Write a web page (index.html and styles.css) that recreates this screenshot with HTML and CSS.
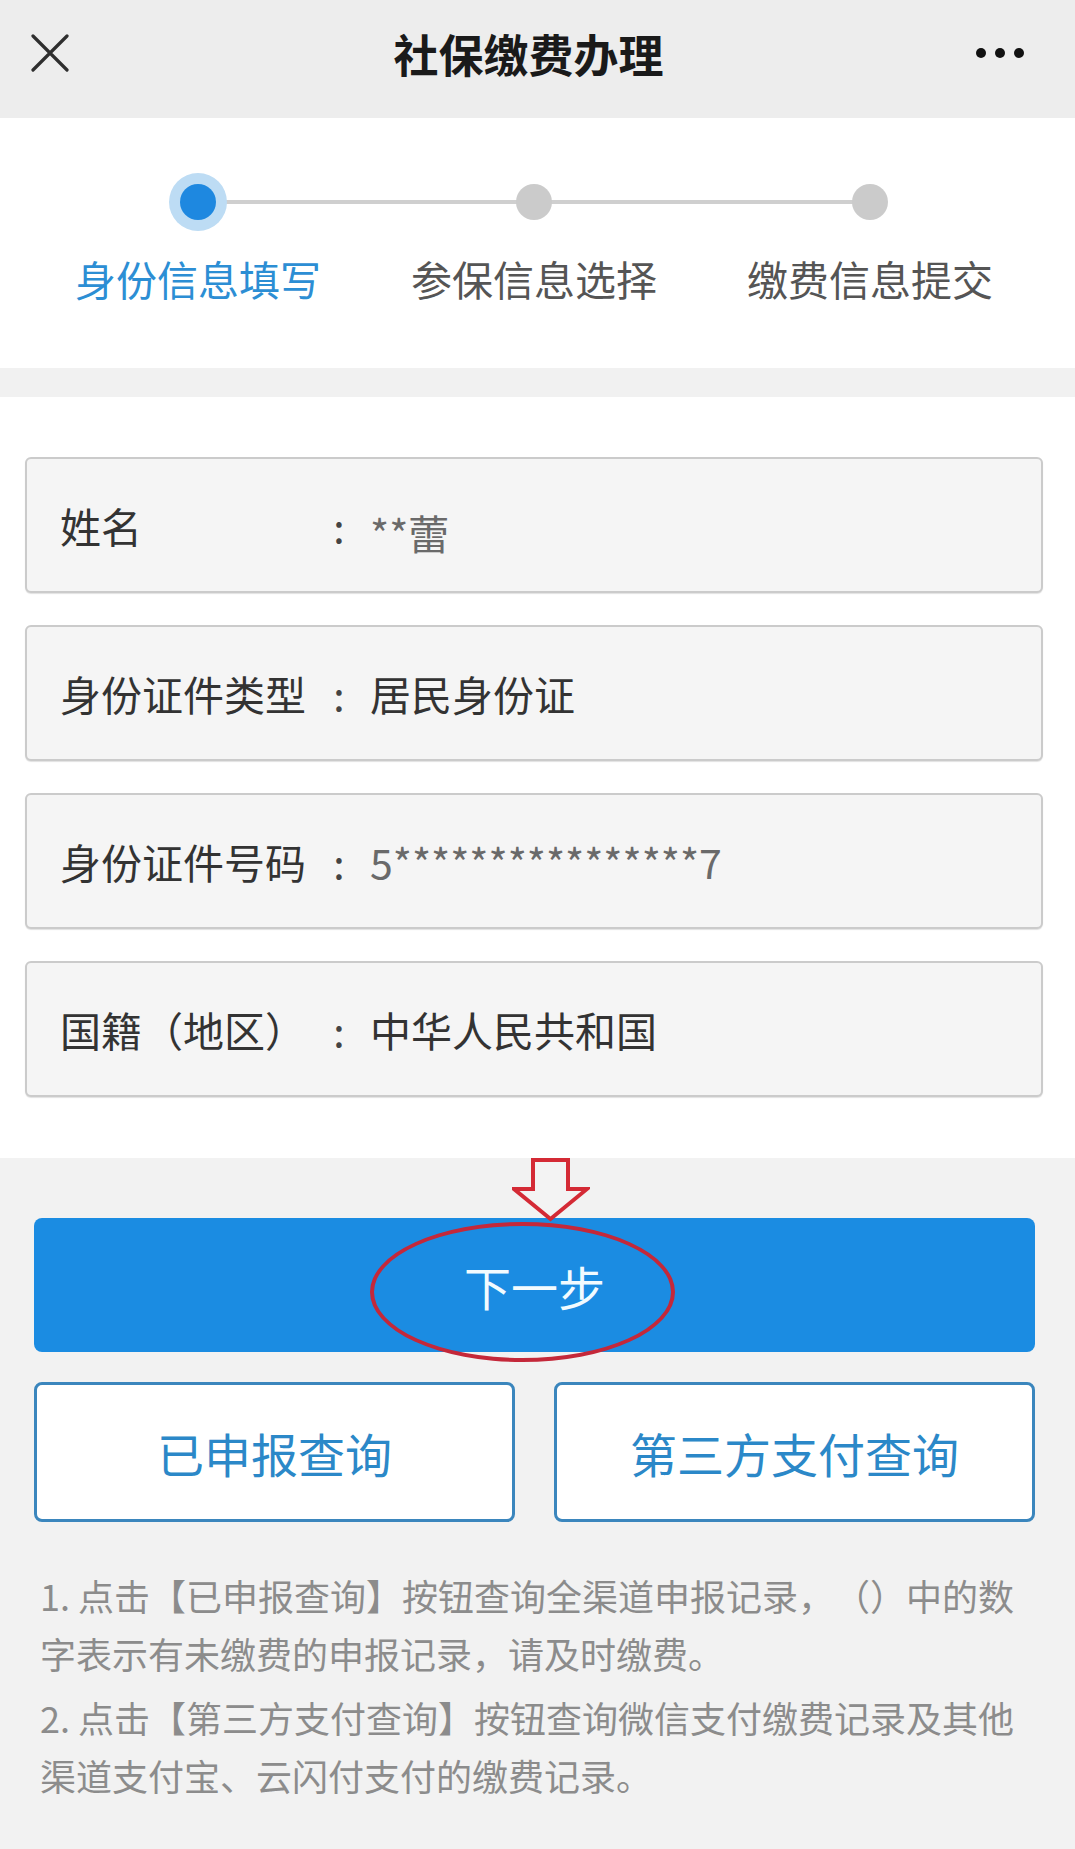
FILE: index.html
```html
<!DOCTYPE html>
<html>
<head>
	<meta charset="utf-8">
	<title>社保缴费办理</title>
	<link rel="stylesheet" href="styles.css">
</head>
<body>
	<div class="topbar">
		<svg class="close" width="38" height="38" viewBox="0 0 38 38">
			<path d="M2 2 L36 36 M36 2 L2 36" stroke="#2e2e2e" stroke-width="3.2" stroke-linecap="round"/>
		</svg>
		<div class="title">社保缴费办理</div>
		<div class="more"><i></i><i></i><i></i></div>
	</div>

	<div class="steps">
		<div class="step active">
			<div class="dot-wrap"><span class="dot"></span></div>
			<div class="step-name">身份信息填写</div>
		</div>
		<div class="step">
			<div class="dot-wrap"><span class="dot"></span></div>
			<div class="step-name">参保信息选择</div>
		</div>
		<div class="step">
			<div class="dot-wrap"><span class="dot"></span></div>
			<div class="step-name">缴费信息提交</div>
		</div>
	</div>

	<div class="band"></div>

	<div class="form">
		<div class="field">
			<span class="label">姓名</span>
			<span class="colon">:</span>
			<span class="value light name">**蕾</span>
		</div>
		<div class="field">
			<span class="label">身份证件类型</span>
			<span class="colon">:</span>
			<span class="value">居民身份证</span>
		</div>
		<div class="field">
			<span class="label">身份证件号码</span>
			<span class="colon">:</span>
			<span class="value light">5****************7</span>
		</div>
		<div class="field">
			<span class="label">国籍（地区）</span>
			<span class="colon">:</span>
			<span class="value">中华人民共和国</span>
		</div>
	</div>

	<div class="actions">
		<svg class="mark-arrow" width="78" height="64" viewBox="0 0 78 64">
			<path d="M21 2 H56 V31 H75 L38.5 61 L2 31 H21 Z" fill="#f3f3f3" stroke="#d42a35" stroke-width="4" stroke-linejoin="miter"/>
		</svg>
		<div class="btn-next">下一步</div>
		<div class="mark-ring"></div>

		<div class="btn-row">
			<div class="btn-line">已申报查询</div>
			<div class="btn-line">第三方支付查询</div>
		</div>

		<div class="notes">
			<p>1. 点击【已申报查询】按钮查询全渠道申报记录，（）中的数字表示有未缴费的申报记录，请及时缴费。</p>
			<p>2. 点击【第三方支付查询】按钮查询微信支付缴费记录及其他渠道支付宝、云闪付支付的缴费记录。</p>
		</div>
	</div>
</body>
</html>
```

FILE: styles.css
```css
body {
	margin: 0;
	background: #f2f2f2;
	font-family: "Noto Sans CJK SC", "Noto Sans", sans-serif;
	color: #333;
	text-spacing-trim: space-all;
}

/* top bar */
.topbar {
	height: 106px; padding: 0 51px 12px 31px;
	background: #ededed;
	display: flex; align-items: center;
}
.close {
	display: block;
	width: 38px; height: 38px;
}
.title {
	flex: 1;
	padding-left: 12px;
	text-align: center;
	font-size: 45px; font-weight: 700;
	color: #1a1a1a;
	line-height: 1;
}
.more {
	display: flex; gap: 9px;
}
.more i {
	width: 10px; height: 10px;
	border-radius: 50%;
	background: #111;
}

/* steps */
.steps {
	background: #fff;
	height: 196px; padding: 54px 0 0 30px;
	display: grid;
	grid-template-columns: repeat(3, 336px);
}
.step {
	position: relative;
	display: flex; flex-direction: column; align-items: center;
}
.step + .step::before {
	content: '';
	position: absolute; z-index: 0;
	top: 28px; left: -50%;
	width: 100%; height: 4px;
	background: #cfcfcf;
}
.dot-wrap {
	position: relative; z-index: 1;
	height: 60px;
	display: flex; align-items: center;
}
.dot {
	width: 36px; height: 36px;
	border-radius: 50%;
	background: #cbcbcb;
}
.step.active .dot {
	background: #1e88e0;
	box-shadow: 0 0 0 11px #bddcf4;
}
.step-name {
	margin-top: 21px;
	font-size: 41px; line-height: 50px;
	color: #555;
}
.step.active .step-name {
	color: #2c8ed4;
}

.band {
	height: 29px;
	background: #f1f1f1;
}

/* fields */
.form {
	background: #fff;
	padding: 60px 32px 61px 25px;
	display: flex; flex-direction: column; gap: 32px;
}
.field {
	height: 132px; padding-left: 33px;
	background: #f5f5f5;
	border: 2px solid #cbcbcb; border-radius: 6px;
	box-shadow: 0 1px 1px rgba(0,0,0,0.12);
	display: flex; align-items: center;
	font-size: 41px;
}
.label {
	width: 262px;
	white-space: nowrap;
}
.colon {
	width: 34px;
	text-align: center;
	color: #444;
}
.value {
	margin-left: 14px;
}
.value.light {
	color: #6a6a6a;
}
.value.name {
	padding-top: 14px;
}

/* buttons */
.actions {
	position: relative;
	padding: 60px 40px 0 34px;
}
.mark-arrow {
	position: absolute; z-index: 2;
	left: 512px; top: 0;
}
.mark-ring {
	position: absolute; z-index: 2;
	left: 370px; top: 64px;
	width: 297px; height: 132px;
	border: 4px solid #c4283a;
	border-radius: 50%;
}
.btn-next {
	height: 134px;
	background: #1b8ce2;
	border-radius: 8px;
	color: #f2fbff;
	font-size: 47px;
	display: flex; align-items: center; justify-content: center;
}
.btn-row {
	margin-top: 30px;
	display: flex; gap: 39px;
}
.btn-line {
	flex: 1;
	height: 134px;
	background: #fff;
	border: 3px solid #3b86bd; border-radius: 8px;
	color: #2b88c8;
	font-size: 47px;
	display: flex; align-items: center; justify-content: center;
}

.notes {
	margin-top: 44px;
	padding: 0 5px 0 6px;
	color: #8c8c8c;
	font-size: 36px; line-height: 58px;
}
.notes p {
	margin: 0 0 6px;
}
```
